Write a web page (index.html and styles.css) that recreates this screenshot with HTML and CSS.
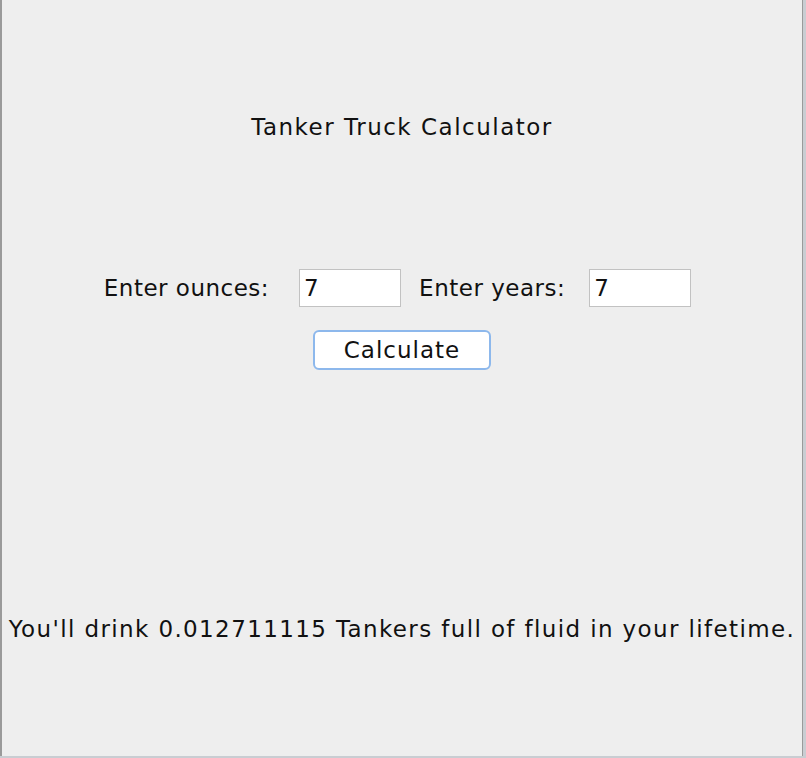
FILE: index.html
```html
<!DOCTYPE html>
<html>
<head>
<meta charset="utf-8">
<link rel="stylesheet" href="styles.css">
</head>
<body>
<div class="window">
  <div class="title">Tanker Truck Calculator</div>
  <div class="row">
    <span class="label">Enter ounces:</span>
    <div class="field f1">7</div>
    <span class="label">Enter years:</span>
    <div class="field f2">7</div>
  </div>
  <div class="btnrow"><button class="btn">Calculate</button></div>
  <div class="result">You'll drink 0.012711115 Tankers full of fluid in your lifetime.</div>
</div>
</body>
</html>
```
FILE: styles.css
```css
html, body {
  margin: 0;
  padding: 0;
  width: 806px;
  height: 758px;
  overflow: hidden;
  background: #c9cdd2;
}
.window {
  box-sizing: border-box;
  width: 803px;
  height: 756px;
  background: #eeeeee;
  border-left: 2px solid #9a9a9a;
  border-right: 1px solid #9a9a9a;
  font-family: "DejaVu Sans", sans-serif;
  color: #111;
  display: flex;
  flex-direction: column;
  align-items: center;
}
.title {
  margin-top: 113px;
  font-size: 23px;
  letter-spacing: 1.5px;
  line-height: 28px;
}
.row {
  margin-top: 128px;
  display: flex;
  align-items: center;
  height: 38px;
  margin-left: -9px;
}
.label {
  font-size: 23px;
  letter-spacing: 0.5px;
  line-height: 28px;
}
.field {
  box-sizing: border-box;
  width: 102px;
  height: 38px;
  border: 1px solid #c2c2c2;
  background: #fff;
  font-size: 23px;
  line-height: 36px;
  padding-left: 4px;
}
.f1 {
  margin: 0 18px 0 30px;
}
.f2 {
  margin: 0 0 0 24px;
}
.btnrow {
  margin-top: 23px;
}
.btn {
  box-sizing: border-box;
  width: 178px;
  height: 40px;
  border: 2px solid #8db8ec;
  border-radius: 6px;
  background: #fff;
  font-family: "DejaVu Sans", sans-serif;
  font-size: 23px;
  letter-spacing: 1px;
  color: #111;
  padding: 0;
}
.result {
  margin-top: 245px;
  font-size: 23px;
  letter-spacing: 1.38px;
  line-height: 28px;
  white-space: nowrap;
}
```
